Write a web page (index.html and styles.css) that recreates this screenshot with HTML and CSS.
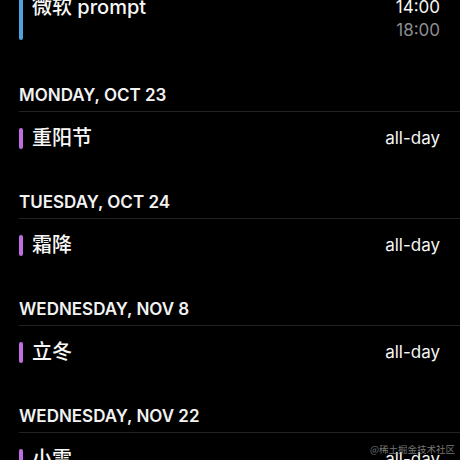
FILE: index.html
```html
<!DOCTYPE html>
<html lang="zh">
<head>
<meta charset="utf-8">
<title>Calendar list</title>
<link rel="stylesheet" href="styles.css">
</head>
<body>
<div class="screen">
  <div class="list">
    <div class="event timed">
      <span class="bar blue"></span>
      <span class="title">微软 prompt</span>
      <span class="times"><span class="start">14:00</span><span class="end">18:00</span></span>
    </div>

    <section class="day">
      <h2 class="day-head">MONDAY, OCT 23</h2>
      <div class="event">
        <span class="bar purple"></span>
        <span class="title">重阳节</span>
        <span class="allday">all-day</span>
      </div>
    </section>

    <section class="day">
      <h2 class="day-head">TUESDAY, OCT 24</h2>
      <div class="event">
        <span class="bar purple"></span>
        <span class="title">霜降</span>
        <span class="allday">all-day</span>
      </div>
    </section>

    <section class="day">
      <h2 class="day-head">WEDNESDAY, NOV 8</h2>
      <div class="event">
        <span class="bar purple"></span>
        <span class="title">立冬</span>
        <span class="allday">all-day</span>
      </div>
    </section>

    <section class="day">
      <h2 class="day-head">WEDNESDAY, NOV 22</h2>
      <div class="event">
        <span class="bar purple"></span>
        <span class="title">小雪</span>
        <span class="allday">all-day</span>
      </div>
    </section>
  </div>
  <div class="watermark">@稀土掘金技术社区</div>
</div>
</body>
</html>
```

FILE: styles.css
```css
html, body {
  margin: 0;
  padding: 0;
  background: #000;
}

body {
  width: 460px;
  height: 460px;
  overflow: hidden;
  color: #fff;
  font-family: Inter, "Noto Sans CJK SC", sans-serif;
}

.screen {
  position: relative;
  width: 460px;
  height: 460px;
  overflow: hidden;
}

.list {
  margin-top: -20px;
  padding-left: 19px;
}

.event {
  display: flex;
  align-items: center;
  gap: 9px;
  padding: 16px 20px 16px 0;
}

.event.timed {
  align-items: stretch;
}

.bar {
  flex: none;
  width: 4px;
  height: 21px;
  border-radius: 2px;
}

.timed .bar {
  height: auto;
  margin-bottom: 2px;
}

.blue { background: #4ea3da; }
.purple { background: #bf6ee0; }

.title {
  flex: 1;
  font-size: 20px;
  font-weight: 500;
  line-height: 21px;
  letter-spacing: 0;
  color: #f7f7f7;
}

.timed .title {
  line-height: 23px;
}

.times {
  display: flex;
  flex-direction: column;
  align-items: flex-end;
  font-size: 17px;
  line-height: 23px;
}

.start { color: #f5f5f5; }
.end { color: #8e8e93; }

.allday {
  font-size: 17px;
  line-height: 21px;
  color: #f5f5f5;
}

.day {
  padding-top: 26px;
}

.day-head {
  margin: 0;
  padding-bottom: 5px;
  border-bottom: 1px solid #222224;
  font-size: 17px;
  font-weight: 600;
  line-height: 22px;
  color: #f2f2f2;
}

.watermark {
  position: absolute;
  right: 5px;
  bottom: 4px;
  font-family: "Noto Sans CJK SC", sans-serif;
  font-size: 9.5px;
  line-height: 13px;
  color: rgba(150, 150, 150, 0.8);
}
```
